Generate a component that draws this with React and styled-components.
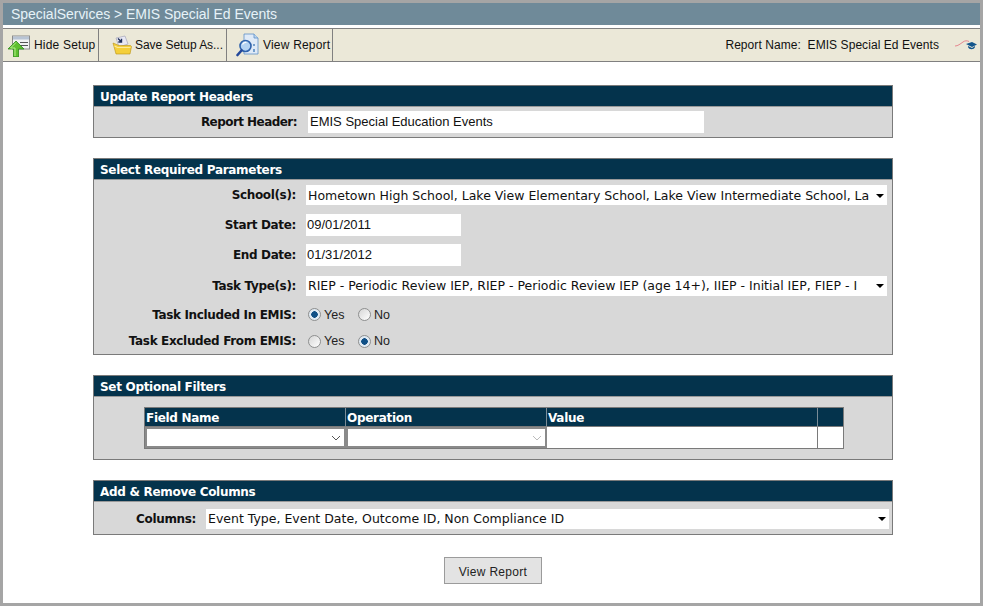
import React from "react";
import styled, { createGlobalStyle } from "styled-components";

const GlobalStyle = createGlobalStyle`
  html, body {
    margin: 0;
    padding: 0;
    background: #fff;
  }
`;

const Frame = styled.div`
  box-sizing: border-box;
  width: 983px;
  height: 606px;
  border: 3px solid #a5a5a5;
  background: #fff;
  overflow: hidden;
  font-family: "Liberation Sans", Arial, sans-serif;
`;

const TitleBar = styled.div`
  height: 22px;
  line-height: 23px;
  padding-left: 8px;
  background: #6f8a99;
  color: #e6f2f8;
  font-size: 14px;
  letter-spacing: -0.03px;
`;

const Toolbar = styled.div`
  box-sizing: border-box;
  display: flex;
  align-items: stretch;
  height: 34px;
  margin-top: 3px;
  background: #ebe8d8;
  border-top: 1px solid #808080;
  border-bottom: 1px solid #808080;
`;

const ToolButton = styled.div`
  display: flex;
  align-items: center;
  gap: ${(p) => p.$gap || 3}px;
  width: ${(p) => p.$w}px;
  box-sizing: border-box;
  padding-left: ${(p) => p.$pad || 4}px;
  border-right: 1px solid #808080;
  font-size: 12px;
  letter-spacing: ${(p) => p.$ls ?? 0.2}px;
  color: #111;
  white-space: nowrap;
`;

const ReportName = styled.div`
  margin-left: auto;
  display: flex;
  align-items: center;
  font-size: 12px;
  letter-spacing: 0.06px;
  color: #111;
  white-space: pre;
`;

const Logo = styled.svg`
  margin-left: 14px;
  margin-right: 3px;
`;

const Content = styled.div`
  display: flex;
  flex-direction: column;
  gap: 20px;
  width: 800px;
  margin: 23px 0 0 90px;
`;

const Panel = styled.section`
  box-sizing: border-box;
  border: 1px solid #7a7a7a;
  background: #d8d8d8;
`;

const PanelHeader = styled.h2`
  margin: 0;
  height: 20px;
  padding-left: 6px;
  background: #04334c;
  color: #fff;
  font: bold 12px/23px "DejaVu Sans", Verdana, sans-serif;
  letter-spacing: -0.3px;
`;

const PanelBody = styled.div`
  display: flex;
  flex-direction: column;
  padding: ${(p) => p.$pad || "0"};
  border-top: 1px solid #999;
`;

const Row = styled.div`
  box-sizing: border-box;
  display: flex;
  align-items: center;
  height: ${(p) => p.$h}px;
  padding-top: ${(p) => p.$pt || 0}px;
`;

const Label = styled.label`
  flex: none;
  box-sizing: border-box;
  width: ${(p) => p.$w || 203}px;
  padding-right: ${(p) => p.$pr ?? 1}px;
  text-align: right;
  font: bold 12px "DejaVu Sans", Verdana, sans-serif;
  letter-spacing: ${(p) => p.$ls ?? -0.35}px;
  color: #111;
`;

const TextField = styled.div`
  box-sizing: border-box;
  width: ${(p) => p.$w}px;
  height: 22px;
  margin-left: ${(p) => p.$ml || 9}px;
  padding-left: ${(p) => p.$pl || 2}px;
  background: #fff;
  font-size: 13px;
  line-height: 21px;
  color: #111;
`;

const MultiSelect = styled.div`
  box-sizing: border-box;
  display: flex;
  align-items: center;
  width: ${(p) => p.$w}px;
  height: 20px;
  margin-left: ${(p) => p.$ml || 9}px;
  padding-left: 2px;
  background: #fff;
  font: 12.5px "DejaVu Sans", Verdana, sans-serif;
  color: #111;
`;

const SelectText = styled.span`
  flex: 1;
  min-width: 0;
  white-space: nowrap;
`;

const Caret = styled.span`
  flex: none;
  width: 0;
  height: 0;
  margin: 1px 3px 0 0;
  border-left: 4px solid transparent;
  border-right: 4px solid transparent;
  border-top: 4px solid #000;
`;

const RadioGroup = styled.div`
  display: flex;
  margin-left: 11px;
`;

const RadioItem = styled.span`
  display: flex;
  align-items: center;
  width: 50px;
  gap: 3px;
  font-size: 12.5px;
  color: #222;
`;

const RadioDot = styled.span`
  box-sizing: border-box;
  width: 13px;
  height: 13px;
  border-radius: 50%;
  border: 1px solid #8e8f8f;
  background: ${(p) =>
    p.$on
      ? "radial-gradient(circle, #0f4f86 0 3px, #dfe9f2 3.5px)"
      : "linear-gradient(135deg, #d6d6d6, #fff)"};
`;

const FilterGrid = styled.div`
  display: grid;
  grid-template-columns: 201px 201px 271px 25px;
  grid-template-rows: 19px 21px;
  width: 700px;
  box-sizing: border-box;
  margin-left: 50px;
  border: 1px solid #7a7a7a;
  background: #fff;
`;

const FilterHead = styled.div`
  box-sizing: border-box;
  padding-left: 1px;
  background: #04334c;
  border-right: ${(p) => (p.$last ? "0" : "1px solid #7a8c97")};
  border-bottom: 1px solid #7a7a7a;
  color: #fff;
  font: bold 12px/20px "DejaVu Sans", Verdana, sans-serif;
  letter-spacing: -0.3px;
`;

const FilterCell = styled.div`
  box-sizing: border-box;
  display: flex;
  align-items: center;
  justify-content: flex-end;
  padding-right: 3px;
  background: #fff;
  border: ${(p) => (p.$box ? "2px solid #8a8a8a" : "0")};
  border-left: ${(p) => (p.$box ? "" : "0")};
  border-right: ${(p) => (p.$last ? "0" : p.$box ? "" : "1px solid #7a7a7a")};
`;

const ActionRow = styled.div`
  display: flex;
  justify-content: center;
  margin-top: 2px;
`;

const ViewButton = styled.button`
  box-sizing: border-box;
  width: 98px;
  height: 27px;
  padding: 2px 0 0 0;
  border: 1px solid #9b9b9b;
  background: #e3e3e3;
  color: #222;
  font: 12px "Liberation Sans", Arial, sans-serif;
  letter-spacing: 0.3px;
`;

const Chevron = ({ color }) => (
  <svg width="10" height="6" viewBox="0 0 10 6">
    <path d="M1 1l4 4 4-4" fill="none" stroke={color} strokeWidth="1" />
  </svg>
);

const HideIcon = () => (
  <svg width="24" height="24" viewBox="0 0 24 24">
    <rect x="5.5" y="3" width="17" height="13" fill="#f2f2f2" stroke="#8c8c8c" />
    <rect x="6" y="3.5" width="16" height="3" fill="#b8c4d4" />
    <path d="M13 9.5h8M13 12.5h8" stroke="#555" strokeWidth="1" />
    <path d="M6.5 24v-8H1l8-8 8 8h-5.5v8z" fill="#5fc030" stroke="#2f8a1c" strokeWidth="0.8" />
    <path d="M8 23v-8H3.5L9 9.5" fill="none" stroke="#b6ee8c" strokeWidth="1" />
  </svg>
);

const SaveIcon = () => (
  <svg width="21" height="21" viewBox="0 0 21 21">
    <path d="M4 3l9-2 3 8-9 3z" fill="#e8e8f4" stroke="#9a9ab0" strokeWidth="0.6" />
    <path d="M6 3.5l3.5 3.5M9.5 3.8v3.2H6.3" fill="none" stroke="#20305a" strokeWidth="1.4" />
    <path d="M1 8l6 2.5h11.5l1 1-1.5 7.500H4z" fill="#f4cf3a" stroke="#b89216" strokeWidth="0.6" />
    <path d="M2.5 11l3 1.500h13" fill="none" stroke="#fdeb9a" strokeWidth="1.2" />
  </svg>
);

const ViewIcon = () => (
  <svg width="24" height="24" viewBox="0 0 24 24">
    <path d="M8 1h10l4 4v16H8z" fill="#dfeaf7" stroke="#5d8fc6" strokeWidth="0.8" />
    <path d="M18 1v4h4" fill="#bcd5ee" stroke="#5d8fc6" strokeWidth="0.8" />
    <path d="M18 11v2M18 16v3" stroke="#2d6cb0" strokeWidth="1.2" />
    <circle cx="9.5" cy="13" r="5.5" fill="#b5d3f2" stroke="#2f62ab" strokeWidth="1.6" />
    <path d="M6.5 11.500a3.500 3.500 0 0 1 4-2" fill="none" stroke="#fff" strokeWidth="1.2" />
    <path d="M5.500 17.500L1.500 22" stroke="#24489a" strokeWidth="2.6" strokeLinecap="round" />
  </svg>
);

const CapLogo = () => (
  <Logo width="24" height="13" viewBox="0 0 24 13">
    <path d="M2 7c3 0 5-2 8-4 2-1.500 4-1.500 6-.5" fill="none" stroke="#e47a86" strokeWidth="0.9" />
    <path d="M13 5l6-2 5 2.500-5 2.500z" fill="#14568c" />
    <path d="M15 8c1 3 6 3 7 0V7l-3 2-4-2z" fill="#14568c" />
  </Logo>
);

const Radio = ({ on, children }) => (
  <RadioItem>
    <RadioDot $on={on} />
    {children}
  </RadioItem>
);

export default function App() {
  return (
    <Frame>
      <GlobalStyle />
      <TitleBar>SpecialServices &gt; EMIS Special Ed Events</TitleBar>
      <Toolbar>
        <ToolButton $w={96}>
          <HideIcon />
          Hide Setup
        </ToolButton>
        <ToolButton $w={128} $pad={13} $gap={2} $ls={-0.05}>
          <SaveIcon />
          Save Setup As...
        </ToolButton>
        <ToolButton $w={106} $pad={9} $gap={3}>
          <ViewIcon />
          View Report
        </ToolButton>
        <ReportName>
          {"Report Name:  EMIS Special Ed Events"}
          <CapLogo />
        </ReportName>
      </Toolbar>

      <Content>
        <Panel>
          <PanelHeader>Update Report Headers</PanelHeader>
          <PanelBody>
            <Row $h={30}>
              <Label $w={204} $pr={1} $ls={-0.55}>Report Header:</Label>
              <TextField $w={396} $ml={10}>
                EMIS Special Education Events
              </TextField>
            </Row>
          </PanelBody>
        </Panel>

        <Panel>
          <PanelHeader>Select Required Parameters</PanelHeader>
          <PanelBody>
            <Row $h={30}>
              <Label>School(s):</Label>
              <MultiSelect $w={581}>
                <SelectText>
                  Hometown High School, Lake View Elementary School, Lake View Intermediate School, La
                </SelectText>
                <Caret />
              </MultiSelect>
            </Row>
            <Row $h={30}>
              <Label>Start Date:</Label>
              <TextField $w={155} $pl={1}>09/01/2011</TextField>
            </Row>
            <Row $h={30}>
              <Label>End Date:</Label>
              <TextField $w={155} $pl={1}>01/31/2012</TextField>
            </Row>
            <Row $h={31}>
              <Label>Task Type(s):</Label>
              <MultiSelect $w={581}>
                <SelectText>
                  RIEP - Periodic Review IEP, RIEP - Periodic Review IEP (age 14+), IIEP - Initial IEP, FIEP - I
                </SelectText>
                <Caret />
              </MultiSelect>
            </Row>
            <Row $h={27}>
              <Label>Task Included In EMIS:</Label>
              <RadioGroup>
                <Radio on>Yes</Radio>
                <Radio>No</Radio>
              </RadioGroup>
            </Row>
            <Row $h={26}>
              <Label>Task Excluded From EMIS:</Label>
              <RadioGroup>
                <Radio>Yes</Radio>
                <Radio on>No</Radio>
              </RadioGroup>
            </Row>
          </PanelBody>
        </Panel>

        <Panel>
          <PanelHeader>Set Optional Filters</PanelHeader>
          <PanelBody $pad="10px 0 10px">
            <FilterGrid>
              <FilterHead>Field Name</FilterHead>
              <FilterHead>Operation</FilterHead>
              <FilterHead>Value</FilterHead>
              <FilterHead $last />
              <FilterCell $box>
                <Chevron color="#555" />
              </FilterCell>
              <FilterCell $box>
                <Chevron color="#bbb" />
              </FilterCell>
              <FilterCell />
              <FilterCell $last />
            </FilterGrid>
          </PanelBody>
        </Panel>

        <Panel>
          <PanelHeader>Add &amp; Remove Columns</PanelHeader>
          <PanelBody>
            <Row $h={32} $pt={1}>
              <Label $w={103} $pr={1}>Columns:</Label>
              <MultiSelect $w={683} $ml={9}>
                <SelectText>Event Type, Event Date, Outcome ID, Non Compliance ID</SelectText>
                <Caret />
              </MultiSelect>
            </Row>
          </PanelBody>
        </Panel>

        <ActionRow>
          <ViewButton>View Report</ViewButton>
        </ActionRow>
      </Content>
    </Frame>
  );
}
